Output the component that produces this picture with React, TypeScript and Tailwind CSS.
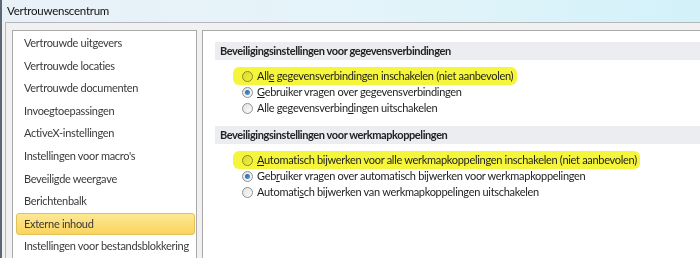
import React from "react";

const items = [
  "Vertrouwde uitgevers",
  "Vertrouwde locaties",
  "Vertrouwde documenten",
  "Invoegtoepassingen",
  "ActiveX-instellingen",
  "Instellingen voor macro's",
  "Beveiligde weergave",
  "Berichtenbalk",
  "Externe inhoud",
  "Instellingen voor bestandsblokkering",
];

function Radio({ checked }: { checked?: boolean }) {
  return (
    <span className="relative z-10 flex h-[11px] w-[11px] shrink-0 items-center justify-center rounded-full border border-[#8f8f8f] bg-gradient-to-br from-[#e2e2e2] to-[#fbfbfb] mix-blend-multiply">
      {checked && (
        <span className="h-[5px] w-[5px] rounded-full bg-gradient-to-br from-[#1f5f9e] to-[#5aa3e0]" />
      )}
    </span>
  );
}

function Option({
  checked,
  children,
  highlight,
}: {
  checked?: boolean;
  children: React.ReactNode;
  highlight?: string;
}) {
  return (
    <div className="relative flex h-[16px] items-center gap-[4px] pl-[27px]">
      {highlight && (
        <span
          className={`absolute top-[-1px] left-[18px] h-[18px] rounded-[6px] bg-[#f5f53c] ${highlight}`}
        />
      )}
      <Radio checked={checked} />
      <span className="relative z-10 whitespace-nowrap text-[#1e1e1e]">{children}</span>
    </div>
  );
}

function Header({ children }: { children: React.ReactNode }) {
  return (
    <div className="flex h-[18px] items-center whitespace-nowrap bg-[#ebedf0] pl-[5px] font-bold tracking-[-0.4px] text-[#222]">
      {children}
    </div>
  );
}

export default function App() {
  return (
    <div
      className="h-[258px] w-[700px] overflow-hidden border-l-2 border-[#5b6874] bg-[#f1f1f1] text-[11px] tracking-[-0.3px]"
      style={{ fontFamily: 'Lato, "Noto Sans", sans-serif' }}
    >
      <div className="flex h-[22px] items-center bg-gradient-to-r from-[#e9f1f7] via-[#e4f4fa] to-[#d3f1f9] pl-[5px] text-[11.5px] tracking-[-0.25px] text-[#111]">
        Vertrouwenscentrum
      </div>
      <div className="ml-[3px] flex h-full gap-[5px] border-t border-l border-[#b4b8bd] pt-[7px] pl-[6px]">
        <div className="w-[185px] shrink-0 border border-[#a9a9a9] bg-white pt-[1px] pr-[1px] pl-[3px]">
          {items.map((t) => (
            <div
              key={t}
              className={
                t === "Externe inhoud"
                  ? "flex h-[22.6px] items-center whitespace-nowrap rounded-[3px] border border-[#e2c05a] bg-gradient-to-b from-[#fde892] to-[#fbd45e] pl-[7px] text-[#3a3a3a]"
                  : "flex h-[22.6px] items-center whitespace-nowrap pl-[8px] text-[#3a3a3a]"
              }
            >
              {t}
            </div>
          ))}
        </div>
        <div className="flex-1 border-t border-l border-[#a9a9a9] bg-white pt-[11px] pl-[12px]">
          <Header>Beveiligingsinstellingen voor gegevensverbindingen</Header>
          <div className="pt-[8px] pb-[10px]">
            <Option highlight="w-[284px]">
              All<u>e</u> gegevensverbindingen inschakelen (niet aanbevolen)
            </Option>
            <Option checked>
              <u>G</u>ebruiker vragen over gegevensverbindingen
            </Option>
            <Option>
              Alle gegevensverbin<u>d</u>ingen uitschakelen
            </Option>
          </div>
          <Header>Beveiligingsinstellingen voor werkmapkoppelingen</Header>
          <div className="pt-[8px]">
            <Option highlight="w-[407px]">
              <u>A</u>utomatisch bijwerken voor alle werkmapkoppelingen inschakelen (niet aanbevolen)
            </Option>
            <Option checked>
              Geb<u>r</u>uiker vragen over automatisch bijwerken voor werkmapkoppelingen
            </Option>
            <Option>
              Automati<u>s</u>ch bijwerken van werkmapkoppelingen uitschakelen
            </Option>
          </div>
        </div>
      </div>
    </div>
  );
}
